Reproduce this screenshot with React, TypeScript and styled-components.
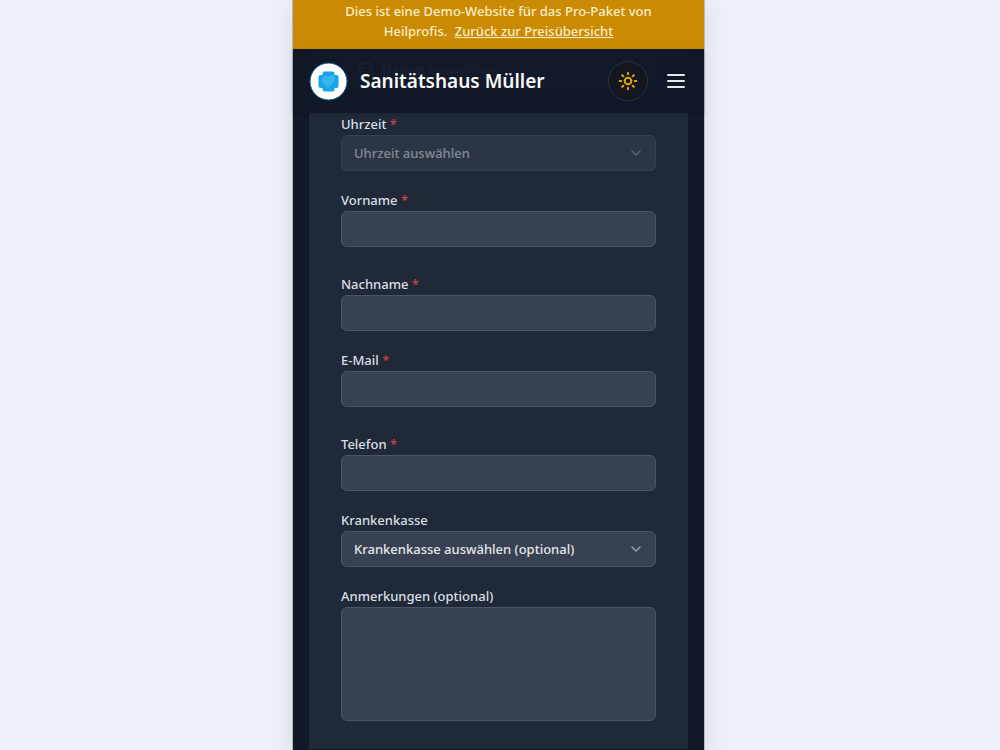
import React from "react";
import styled, { createGlobalStyle } from "styled-components";
import { Calendar, ChevronDown, Sun } from "lucide-react";

const GlobalStyle = createGlobalStyle`
  *, *::before, *::after { box-sizing: border-box; }
  body {
    margin: 0;
    padding-right: 3px;
    background: #ecf0f9;
    color: #e5e7eb;
    font-family: "Noto Sans", "Open Sans", sans-serif;
    font-size: 13px;
    font-weight: 500;
    line-height: 20px;
  }
  button, input, select, textarea { font: inherit; color: inherit; }
`;

const Shell = styled.div`
  display: flex;
  flex-direction: column;
  width: 100%;
  max-width: 411px;
  min-height: 100vh;
  margin: 0 auto;
  background: #111827;
  box-shadow: 0 0 0 1px #b6bbc3, 0 8px 24px rgba(70, 80, 80, 0.14);
`;

const Banner = styled.aside`
  padding: 1px 40px 8px;
  background: #ca8a04;
  color: #fbeec4;
  text-align: center;
`;

const BannerLink = styled.a`
  margin-left: 4px;
  color: inherit;
  text-decoration: underline;
`;

const Header = styled.header`
  position: sticky;
  top: 0;
  z-index: 2;
  display: flex;
  align-items: center;
  height: 64px;
  padding: 0 16px;
  background: rgba(17, 24, 39, 0.96);
  box-shadow: 0 1px 3px rgba(0, 0, 0, 0.2);
`;

const Brand = styled.a`
  display: flex;
  flex: 1;
  align-items: center;
  gap: 12px;
  color: #f9fafb;
  font-size: 19px;
  font-weight: 600;
  line-height: 28px;
  text-decoration: none;
  white-space: nowrap;
`;

const ThemeButton = styled.button`
  display: grid;
  place-items: center;
  width: 40px;
  height: 40px;
  padding: 0;
  border: 1px solid #243447;
  border-radius: 50%;
  background: #14171f;
  color: #dba80c;
`;

const MenuButton = styled.button`
  display: grid;
  place-items: center;
  width: 24px;
  height: 40px;
  margin-left: 16px;
  padding: 0;
  border: 0;
  background: none;
  color: #e5e7eb;
`;

const Main = styled.main`
  display: flex;
  flex: 1;
  margin-top: -64px;
  padding: 0 16px 1px;
`;

const Form = styled.form`
  display: flex;
  flex: 1;
  flex-direction: column;
  min-width: 0;
  gap: 20px;
  padding: 2px 32px 28px;
  background: #1f2937;
`;

const Group = styled.div`
  display: flex;
  flex-direction: column;
  gap: 28px;
`;

const Field = styled.div`
  display: flex;
  flex-direction: column;
  gap: 2px;
`;

const Label = styled.label`
  color: #dcdfe4;
  line-height: 18px;
`;

const Required = styled.span`
  color: #dc3f45;
`;

const controlStyle = `
  display: block;
  width: 100%;
  height: 36px;
  padding: 0 12px;
  border: 1px solid #4b5563;
  border-radius: 6px;
  background: #374151;
`;

const Input = styled.input`${controlStyle}`;

const DateButton = styled.button`
  ${controlStyle}
  display: flex;
  align-items: center;
  gap: 8px;
  padding: 0 16px;
  text-align: left;
`;

const Select = styled.select`
  ${controlStyle}
  appearance: none;
  opacity: 1;
`;

const SelectBox = styled.div<{ $disabled?: boolean }>`
  display: grid;
  align-items: center;
  opacity: ${(p) => (p.$disabled ? 0.5 : 1)};

  > * { grid-area: 1 / 1; }
  > svg {
    justify-self: end;
    margin-right: 12px;
    color: #9ca3af;
    pointer-events: none;
  }
`;

const Textarea = styled.textarea`
  ${controlStyle}
  height: 114px;
  padding: 8px 12px;
  resize: none;
`;

function Logo() {
  return (
    <svg width="39" height="39" viewBox="0 0 39 39" aria-hidden="true">
      <circle cx="19.5" cy="19.5" r="18.5" fill="#fff" stroke="#0b5c86" strokeWidth="1" />
      <path
        d="M15.5 9.5h8a2 2 0 0 1 2 2v1.500h2a2 2 0 0 1 2 2v9a2 2 0 0 1-2 2h-2v1.500a2 2 0 0 1-2 2h-8a2 2 0 0 1-2-2v-1.500h-2a2 2 0 0 1-2-2v-9a2 2 0 0 1 2-2h2v-1.500a2 2 0 0 1 2-2z"
        fill="#14a5ea"
      />
      <path
        d="M19 26l-4.500-4c-2-2-2.500-5-.5-7.200 1.500-1.300 3.500-1.500 5.500-.3 2-1.500 4.500-2.200 6-.7 1.200 2 .5 5.200-1.500 7.200z"
        fill="#38b4ef"
      />
    </svg>
  );
}

function MenuIcon() {
  return (
    <svg width="24" height="24" viewBox="0 0 24 24" fill="none" stroke="currentColor" strokeWidth="2" strokeLinecap="round" aria-hidden="true">
      <path d="M4 6h16M4 12h16M4 18h16" />
    </svg>
  );
}

function TextField({ id, label, type = "text" }: { id: string; label: string; type?: string }) {
  return (
    <Field>
      <Label htmlFor={id}>
        {label} <Required>*</Required>
      </Label>
      <Input id={id} type={type} required />
    </Field>
  );
}

export default function App() {
  return (
    <>
      <GlobalStyle />
      <Shell>
        <Banner>
          Dies ist eine Demo-Website für das Pro-Paket von Heilprofis.{" "}
          <BannerLink href="#preise">Zurück zur Preisübersicht</BannerLink>
        </Banner>
        <Header>
          <Brand href="#start">
            <Logo />
            Sanitätshaus Müller
          </Brand>
          <ThemeButton type="button" aria-label="Helles Design">
            <Sun size={20} strokeWidth={2.4} />
          </ThemeButton>
          <MenuButton type="button" aria-label="Menü">
            <MenuIcon />
          </MenuButton>
        </Header>
        <Main>
          <Form>
            <Group>
              <DateButton type="button">
                <Calendar size={16} />
                Datum auswählen
              </DateButton>
              <Field>
                <Label htmlFor="uhrzeit">
                  Uhrzeit <Required>*</Required>
                </Label>
                <SelectBox $disabled>
                  <Select id="uhrzeit" disabled>
                    <option>Uhrzeit auswählen</option>
                  </Select>
                  <ChevronDown size={16} />
                </SelectBox>
              </Field>
            </Group>
            <Group>
              <TextField id="vorname" label="Vorname" />
              <TextField id="nachname" label="Nachname" />
            </Group>
            <Group>
              <TextField id="email" label="E-Mail" type="email" />
              <TextField id="telefon" label="Telefon" type="tel" />
            </Group>
            <Field>
              <Label htmlFor="kasse">Krankenkasse</Label>
              <SelectBox>
                <Select id="kasse">
                  <option>Krankenkasse auswählen (optional)</option>
                </Select>
                <ChevronDown size={16} />
              </SelectBox>
            </Field>
            <Field>
              <Label htmlFor="anmerkungen">Anmerkungen (optional)</Label>
              <Textarea id="anmerkungen" />
            </Field>
          </Form>
        </Main>
      </Shell>
    </>
  );
}
